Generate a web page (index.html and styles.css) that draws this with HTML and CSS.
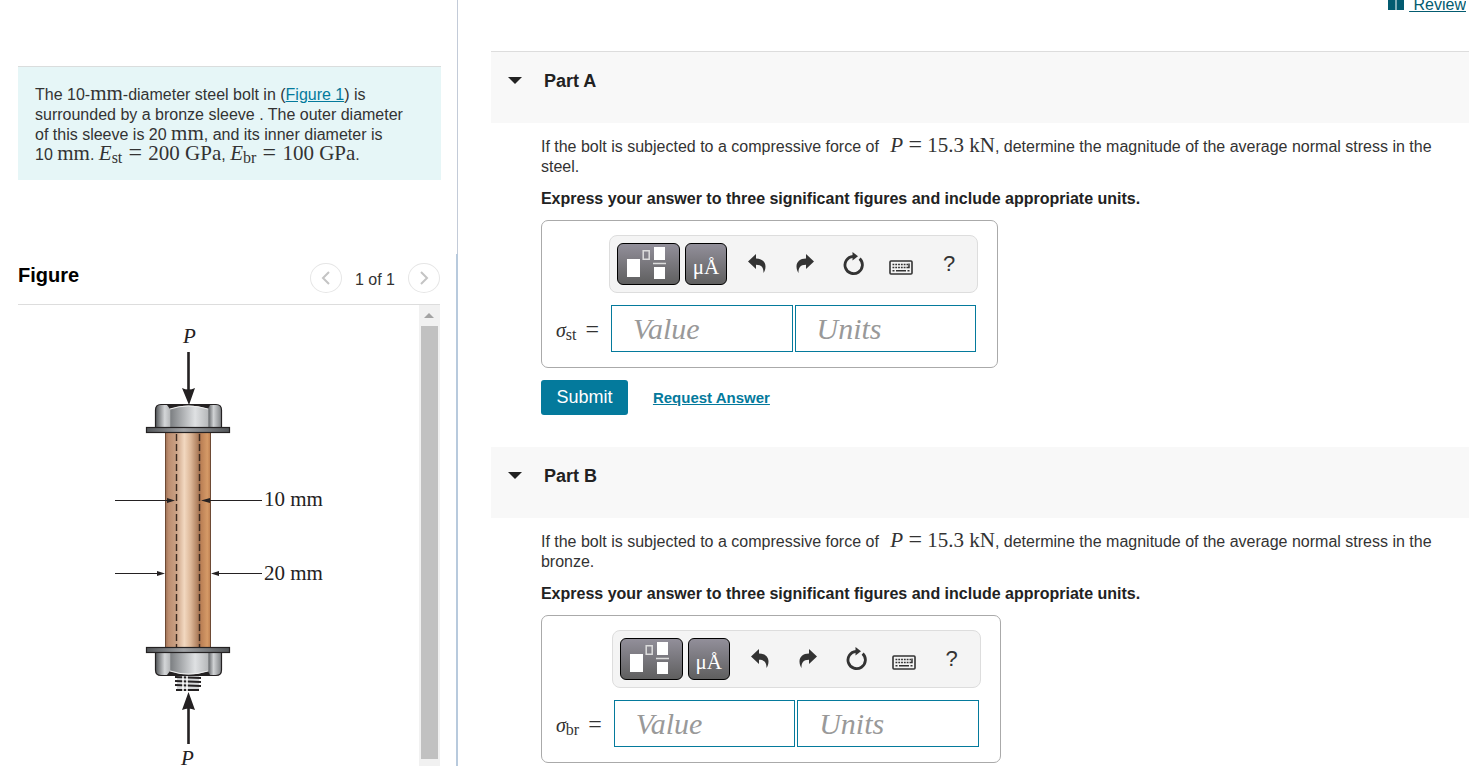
FILE: index.html
```html
<!DOCTYPE html>
<html lang="en">
<head>
    <meta charset="UTF-8">
    <meta name="viewport" content="width=device-width, initial-scale=1.0">
    <title>Steel bolt and bronze sleeve</title>
    <link rel="stylesheet" href="styles.css">
</head>
<body>
    <!-- shared toolbar icons -->
    <svg class="sprite" aria-hidden="true">
        <symbol id="icon-undo" viewBox="0 0 18 20">
            <path d="M0 7.5 L8 0 V4.5 C14 4.5 17.5 8 17.5 12.5 C17.5 15.5 16.5 17.5 15.5 19 C15.6 14 14 10.8 8 10.8 V15 Z"/>
        </symbol>
        <symbol id="icon-redo" viewBox="0 0 18 20">
            <path d="M18 7.5 L10 0 V4.5 C4 4.5 .5 8 .5 12.5 C.5 15.5 1.5 17.5 2.5 19 C2.4 14 4 10.8 10 10.8 V15 Z"/>
        </symbol>
        <symbol id="icon-reset" viewBox="0 0 22 24">
            <path d="M17.6 6.6 A8.7 8.7 0 1 1 11 4.3" fill="none" stroke="currentColor" stroke-width="2.8"/>
            <path d="M10.5 0 L16 4.2 L10.5 8.6 Z"/>
        </symbol>
        <symbol id="icon-keyboard" viewBox="0 0 24 15">
            <rect x="1" y="1" width="22" height="13" rx="1" fill="none" stroke="currentColor" stroke-width="1.6"/>
            <path d="M3.5 4.5 H19 M3.5 7.5 H17" fill="none" stroke="currentColor" stroke-width="1.6" stroke-dasharray="1.8 1"/>
            <path d="M3.5 10.7 H5.5 M7 10.7 H17 M18.5 10.7 H20.5 M20 3.5 V7.6 H17.5" fill="none" stroke="currentColor" stroke-width="1.5"/>
        </symbol>
        <symbol id="icon-template" viewBox="0 0 61 40">
            <path d="M9 15 H22 V33 H9 Z M36 3 H47 V16 H36 Z M36 23 H47 V35 H36 Z" fill="#fff"/>
            <path d="M25.2 6.7 H31.2 V15.3 H25.2 Z" fill="none" stroke="#ddd" stroke-width="1.5"/>
            <path d="M35 19.5 H48" stroke="#ddd" stroke-width="1.5"/>
        </symbol>
    </svg>

    <div class="page">
        <aside class="sidebar">
            <section class="intro">
                <p class="problem">The 10-<span class="math">mm</span>-diameter steel bolt in (<a href="#figure">Figure 1</a>) is surrounded by a bronze sleeve . The outer diameter of this sleeve is 20&nbsp;<span class="math">mm</span>, and its inner diameter is 10&nbsp;<span class="math">mm</span>. <span class="math"><i>E</i><sub>st</sub> <b>=</b> 200 GPa</span>, <span class="math"><i>E</i><sub>br</sub> <b>=</b> 100 GPa</span>.</p>
            </section>

            <section class="figure" id="figure">
                <header class="figure-header">
                    <h2>Figure</h2>
                    <div class="pager">
                        <button type="button" aria-label="Previous figure"><svg width="10" height="14" viewBox="0 0 10 14"><path d="M8 1 L2 7 L8 13"/></svg></button>
                        <span>1 of 1</span>
                        <button type="button" aria-label="Next figure"><svg width="10" height="14" viewBox="0 0 10 14"><path d="M2 1 L8 7 L2 13"/></svg></button>
                    </div>
                </header>
                <div class="figure-body">
                    <svg class="drawing" width="401" height="461" viewBox="18 305 401 461" role="img" aria-label="Bolt with sleeve under load P">
                        <defs>
                            <linearGradient id="bronze">
                                <stop offset="0" stop-color="#9a6c50"/>
                                <stop offset=".08" stop-color="#bd8e70"/>
                                <stop offset=".24" stop-color="#c9a083"/>
                                <stop offset=".42" stop-color="#f2d8c0"/>
                                <stop offset=".56" stop-color="#dcb798"/>
                                <stop offset=".75" stop-color="#a3714f"/>
                                <stop offset=".79" stop-color="#bc8156"/>
                                <stop offset=".92" stop-color="#d59a67"/>
                                <stop offset="1" stop-color="#b97a4b"/>
                            </linearGradient>
                            <linearGradient id="steel">
                                <stop offset="0" stop-color="#505356"/>
                                <stop offset=".14" stop-color="#d4d6d8"/>
                                <stop offset=".22" stop-color="#b5b7b9"/>
                                <stop offset=".23" stop-color="#7d8083"/>
                                <stop offset=".6" stop-color="#dfe1e3"/>
                                <stop offset=".79" stop-color="#b8babc"/>
                                <stop offset=".81" stop-color="#6d7073"/>
                                <stop offset=".88" stop-color="#d0d2d4"/>
                                <stop offset="1" stop-color="#7d8083"/>
                            </linearGradient>
                            <linearGradient id="washer">
                                <stop offset="0" stop-color="#54575a"/>
                                <stop offset=".45" stop-color="#a0a2a5"/>
                                <stop offset="1" stop-color="#54575a"/>
                            </linearGradient>
                            <g id="head">
                                <path d="M155.500 428 V410 Q155.500 404.500 161 404.500 H216 Q221.500 404.500 221.500 410 V428 Z" fill="url(#steel)" stroke="#242122" stroke-width="1.2"/>
                                <path d="M167 405 H210 L208 409 Q188 402 170 409 Z" fill="#242122"/>
                                <path d="M170 409 Q188 403 208 409" fill="none" stroke="#eee" stroke-width="1.2"/>
                                <rect x="146.500" y="427.500" width="83" height="5" fill="url(#washer)" stroke="#242122" stroke-width="1.2"/>
                            </g>
                        </defs>
                        <rect x="165" y="433" width="46" height="215" fill="url(#bronze)"/>
                        <path d="M165.5 433 V648 M210.5 433 V648" stroke="#6d4a35" stroke-width="1"/>
                        <path d="M176.500 434 V647 M199.500 434 V647" stroke="#3c2a20" stroke-width="1.4" stroke-dasharray="7 3"/>
                        <use href="#head"/>
                        <rect x="177" y="674" width="22" height="17" fill="#d8dadc"/>
                        <path d="M175 677 L201 678 M175 681 L201 682 M175 685 L201 686 M176 690 L199 690" stroke="#242122" stroke-width="2"/>
                        <path d="M183 676 V691 M187 676 V691" stroke="#fff" stroke-width="1.5"/>
                        <use href="#head" transform="matrix(1 0 0 -1 0 1080)"/>
                        <path d="M188.500 352 V392 M188.500 704 V744" stroke="#242122" stroke-width="2.600"/>
                        <path d="M182 388 Q188.500 391 195 388 L189 405 Z M182 710 Q188.500 707 195 710 L188.500 692 Z" fill="#242122"/>
                        <path d="M115 500.500 H168 M205 500.500 H262 M115 573.500 H160 M215 573.500 H262" stroke="#242122" stroke-width="1.200"/>
                        <path d="M175 500.500 L167 498 V503 Z M201 500.500 L210 498 V503 Z M165 573.500 L157 571 V576 Z M211 573.500 L219 571 V576 Z" fill="#242122"/>
                        <g class="drawing-text">
                            <text x="183" y="343" font-style="italic">P</text>
                            <text x="181" y="765" font-style="italic">P</text>
                            <text x="264" y="506">10 mm</text>
                            <text x="264" y="580">20 mm</text>
                        </g>
                    </svg>
                    <div class="scrollbar"><div class="scroll-arrow"></div><div class="scroll-thumb"></div></div>
                </div>
            </section>
        </aside>

        <main class="content">
            <nav class="topbar">
                <svg width="16" height="16" viewBox="0 0 16 16" aria-hidden="true"><path d="M0 0 H7.500 V16 H0 Z M8.500 0 H16 V16 H8.500 Z"/></svg>
                <a href="#review">&nbsp;Review</a>
            </nav>

            <section class="part part-first">
                <header class="part-header">
                    <button type="button" class="toggle" aria-label="Collapse Part A"></button>
                    <h2>Part A</h2>
                </header>
                <div class="part-body">
                    <p class="question">If the bolt is subjected to a compressive force of <span class="math"><i>P</i> <b>=</b> 15.3 kN</span>, determine the magnitude of the average normal stress in the steel.</p>
                    <p class="instructions">Express your answer to three significant figures and include appropriate units.</p>
                    <form class="answer">
                        <div class="toolbar">
                            <button type="button" class="key key-wide" aria-label="Templates"><svg width="61" height="40"><use href="#icon-template"/></svg></button>
                            <button type="button" class="key key-units">μÅ</button>
                            <div class="tools">
                                <button type="button" aria-label="Undo"><svg width="18" height="20"><use href="#icon-undo"/></svg></button>
                                <button type="button" aria-label="Redo"><svg width="18" height="20"><use href="#icon-redo"/></svg></button>
                                <button type="button" aria-label="Reset"><svg width="22" height="24"><use href="#icon-reset"/></svg></button>
                                <button type="button" class="keyboard" aria-label="Keyboard"><svg width="24" height="15"><use href="#icon-keyboard"/></svg></button>
                                <button type="button">?</button>
                            </div>
                        </div>
                        <label class="symbol" for="value-a"><i>σ</i><sub>st</sub> <b>=</b></label>
                        <div class="fields">
                            <input type="text" id="value-a" placeholder="Value">
                            <input type="text" placeholder="Units" aria-label="Units for Part A">
                        </div>
                    </form>
                    <div class="actions">
                        <button type="button" class="submit">Submit</button>
                        <a href="#answer-a">Request Answer</a>
                    </div>
                </div>
            </section>

            <section class="part">
                <header class="part-header">
                    <button type="button" class="toggle" aria-label="Collapse Part B"></button>
                    <h2>Part B</h2>
                </header>
                <div class="part-body">
                    <p class="question">If the bolt is subjected to a compressive force of <span class="math"><i>P</i> <b>=</b> 15.3 kN</span>, determine the magnitude of the average normal stress in the bronze.</p>
                    <p class="instructions">Express your answer to three significant figures and include appropriate units.</p>
                    <form class="answer">
                        <div class="toolbar">
                            <button type="button" class="key key-wide" aria-label="Templates"><svg width="61" height="40"><use href="#icon-template"/></svg></button>
                            <button type="button" class="key key-units">μÅ</button>
                            <div class="tools">
                                <button type="button" aria-label="Undo"><svg width="18" height="20"><use href="#icon-undo"/></svg></button>
                                <button type="button" aria-label="Redo"><svg width="18" height="20"><use href="#icon-redo"/></svg></button>
                                <button type="button" aria-label="Reset"><svg width="22" height="24"><use href="#icon-reset"/></svg></button>
                                <button type="button" class="keyboard" aria-label="Keyboard"><svg width="24" height="15"><use href="#icon-keyboard"/></svg></button>
                                <button type="button">?</button>
                            </div>
                        </div>
                        <label class="symbol" for="value-b"><i>σ</i><sub>br</sub> <b>=</b></label>
                        <div class="fields">
                            <input type="text" id="value-b" placeholder="Value">
                            <input type="text" placeholder="Units" aria-label="Units for Part B">
                        </div>
                    </form>
                </div>
            </section>
        </main>
    </div>
</body>
</html>
```
FILE: styles.css
```css
* {
    box-sizing: border-box;
}

body {
    margin: 0;
    font-family: "Liberation Sans", Arial, sans-serif;
    font-size: 16px;
    line-height: 20px;
    color: #333;
    background-color: #fff;
}

h2, p {
    margin: 0;
}

a {
    color: #047a9c;
}

button {
    font-family: inherit;
    color: inherit;
    padding: 0;
    border: none;
    background: none;
    cursor: pointer;
}

.sprite {
    display: none;
}

.page {
    display: grid;
    grid-template-columns: 30.9% 1fr;
    height: 100vh;
    overflow: hidden;
}

/* formulas */
.math {
    font-family: "Liberation Serif", "Times New Roman", serif;
    font-size: 21px;
    line-height: 0;
    white-space: nowrap;
}

.math b,
.symbol b {
    font-weight: normal;
    font-size: 24px;
    line-height: 0;
}

sub {
    font-size: 16px;
    line-height: 0;
    vertical-align: -3px;
}

/* left column */
.sidebar {
    display: flex;
    flex-direction: column;
    min-height: 0;
}

.intro {
    min-height: 254px;
    padding: 66px 16px 0 18px;
    border-right: 1px solid #c3cbd8;
}

.problem {
    padding: 18px 26px 15px 17px;
    border-top: 1px solid #dadddd;
    background-color: #e6f6f7;
}

.problem b {
    margin: 0 1px;
}

.figure {
    flex: 1;
    display: flex;
    flex-direction: column;
    min-height: 0;
    padding: 0 16px 0 18px;
    border-right: 2px solid #b8cadd;
}

.figure-header {
    display: flex;
    align-items: flex-start;
    justify-content: space-between;
    height: 51px;
    padding-top: 9px;
    border-bottom: 1px solid #ddd;
}

.figure-header h2 {
    padding-top: 2px;
    font-size: 20px;
    color: #000;
}

.pager {
    display: flex;
    align-items: center;
    gap: 13px;
}

.pager span {
    padding-top: 4px;
}

.pager button {
    display: grid;
    place-items: center;
    width: 32px;
    height: 30px;
    border: 1px solid #e6e6e6;
    border-radius: 50%;
}

.pager path {
    fill: none;
    stroke: #c4c4c4;
    stroke-width: 2;
}

.figure-body {
    flex: 1;
    display: flex;
    justify-content: space-between;
    min-height: 0;
    overflow: hidden;
}

.drawing {
    flex: none;
}

.drawing-text {
    font-family: "Liberation Serif", "Times New Roman", serif;
    font-size: 21px;
    fill: #242122;
}

.scrollbar {
    display: flex;
    flex-direction: column;
    width: 21px;
    padding: 0 2px 7px;
    background-color: #f1f1f1;
}

.scroll-arrow {
    display: grid;
    place-items: center;
    height: 21px;
}

.scroll-arrow::before {
    content: "";
    border: 5px solid transparent;
    border-top: none;
    border-bottom-color: #a3a3a3;
}

.scroll-thumb {
    flex: 1;
    background-color: #c1c1c1;
}

/* right column */
.content {
    padding: 0 13px 0 33px;
    min-width: 0;
}

.topbar {
    display: flex;
    justify-content: flex-end;
    gap: 5px;
    height: 51px;
    margin-right: 3px;
    overflow: hidden;
}

.topbar svg {
    margin-top: -6px;
    fill: #035b70;
}

.topbar a {
    margin-top: -5px;
    color: #035b70;
}

.part-header {
    display: flex;
    gap: 22px;
    padding: 19px 17px 32px;
    background-color: #f8f8f8;
}

.part-first .part-header {
    border-top: 1px solid #ddd;
}

.part-header h2 {
    font-size: 18px;
    color: #222;
}

.toggle {
    width: 14px;
    height: 18px;
}

.toggle::before {
    content: "";
    display: block;
    border: 7px solid transparent;
    border-top-color: #222;
    border-bottom: none;
}

.part-body {
    padding: 14px 24px 0 50px;
}

.part-first .part-body {
    padding-bottom: 32px;
}

.question .math {
    margin-left: 7px;
}

.instructions {
    margin: 12px 0 11px;
    font-weight: bold;
    color: #222;
}

.answer {
    display: grid;
    grid-template-columns: auto auto;
    column-gap: 10px;
    row-gap: 12px;
    width: fit-content;
    padding: 14px 19px 15px 14px;
    border: 1px solid #aaa;
    border-radius: 7px;
}

.toolbar {
    grid-column: 2;
    display: flex;
    align-items: center;
    gap: 5px;
    height: 58px;
    padding: 0 4px 0 7px;
    border: 1px solid #ddd;
    border-radius: 8px;
    background-color: #f4f4f4;
}

.key {
    display: grid;
    place-items: center;
    width: 42px;
    height: 42px;
    border: 1px solid #000;
    border-radius: 6px;
    background-image: linear-gradient(#928f9a, #5f5f5f);
    color: #fff;
}

.key-wide {
    width: 63px;
}

.key-units {
    padding-top: 6px;
    font-family: "Liberation Serif", "Times New Roman", serif;
    font-size: 21px;
}

.tools {
    display: flex;
    margin-left: 1px;
}

.tools button {
    display: grid;
    place-items: center;
    width: 48px;
    height: 42px;
    font-size: 22px;
}

.tools svg {
    fill: currentColor;
}

.tools .keyboard {
    padding-top: 6px;
}

.symbol {
    align-self: center;
    padding-top: 2px;
    font-family: "Liberation Serif", "Times New Roman", serif;
    font-size: 20px;
    white-space: nowrap;
}

.symbol b {
    margin-left: 4px;
}

.fields {
    display: flex;
    gap: 2px;
    padding: 0 2px;
}

.fields input {
    flex: 1;
    width: 181px;
    height: 47px;
    padding: 0 21px;
    border: 1px solid #047a9c;
    border-radius: 0;
    font-family: "Liberation Serif", "Times New Roman", serif;
    font-size: 30px;
    font-style: italic;
}

.fields input::placeholder {
    color: #999;
}

.actions {
    display: flex;
    align-items: center;
    gap: 25px;
    margin-top: 12px;
}

.actions a {
    font-size: 15px;
    font-weight: bold;
}

.submit {
    width: 87px;
    height: 35px;
    border-radius: 3px;
    background-color: #047a9c;
    color: #fff;
    font-size: 18px;
}
```
